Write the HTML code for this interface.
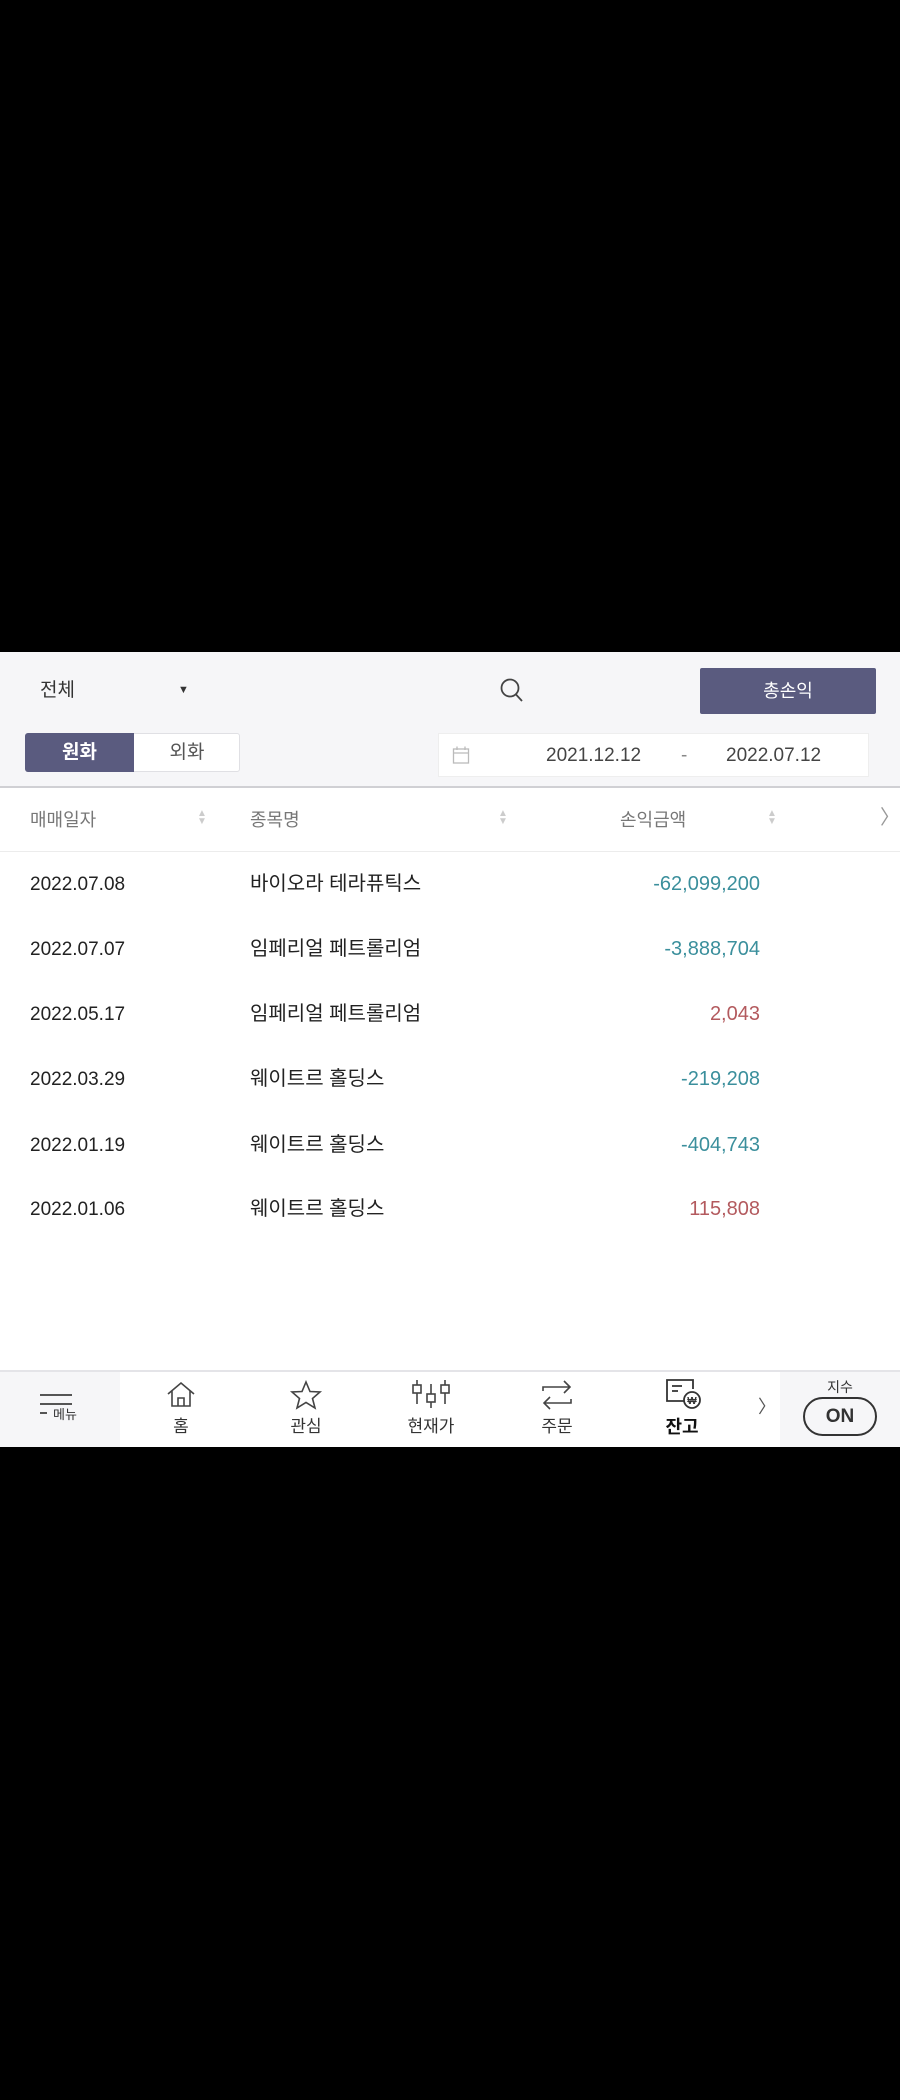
<!DOCTYPE html>
<html><head><meta charset="utf-8"><style>
*{margin:0;padding:0;box-sizing:border-box}
body{width:900px;height:2100px;background:#000;position:relative;font-family:"Liberation Sans","Noto Sans CJK KR",sans-serif;overflow:hidden}
.a{position:absolute}
.t{position:absolute;white-space:nowrap;line-height:1}
</style></head><body>
<div class="a" style="left:0;top:652px;width:900px;height:135px;background:#f6f6f8"></div>
<div class="a" style="left:0;top:786px;width:900px;height:2px;background:#d0d0d4"></div>
<div class="a" style="left:0;top:788px;width:900px;height:582px;background:#fff"></div>
<div class="t" style="left:40px;top:681px;font-size:19px;color:#333">전체</div>
<div class="t" style="left:178px;top:685px;font-size:11px;color:#333">▼</div>
<svg class="a" style="left:498px;top:677px" width="28" height="28" viewBox="0 0 28 28"><circle cx="12" cy="11" r="8.5" fill="none" stroke="#444" stroke-width="1.8"/><path d="M18 17.5L24 24" stroke="#444" stroke-width="1.8"/></svg>
<div class="a" style="left:700px;top:668px;width:176px;height:46px;background:#5a5b7f;border-radius:2px"></div>
<div class="t" style="left:700px;top:682px;width:176px;text-align:center;font-size:18px;color:#fff">총손익</div>
<div class="a" style="left:25px;top:733px;width:215px;height:39px;background:#fff;border:1px solid #e0e0e4;border-radius:3px"></div>
<div class="a" style="left:25px;top:733px;width:109px;height:39px;background:#5a5b7f;border-radius:3px 0 0 3px"></div>
<div class="t" style="left:25px;top:743px;width:109px;text-align:center;font-size:19px;font-weight:bold;color:#fff">원화</div>
<div class="t" style="left:134px;top:743px;width:106px;text-align:center;font-size:19px;color:#555">외화</div>
<div class="a" style="left:438px;top:733px;width:431px;height:44px;background:#fff;border:1px solid #eee"></div>
<svg class="a" style="left:452px;top:745px" width="18" height="20" viewBox="0 0 18 20"><rect x="1.5" y="4" width="15" height="14" fill="none" stroke="#bbb" stroke-width="1.3"/><path d="M1.5 8H16.5M5 1.5V5M13 1.5V5" stroke="#bbb" stroke-width="1.3"/></svg>
<div class="t" style="left:546px;top:746px;font-size:19px;color:#444">2021.12.12</div>
<div class="t" style="left:681px;top:746px;font-size:19px;color:#888">-</div>
<div class="t" style="left:726px;top:746px;font-size:19px;color:#444">2022.07.12</div>
<div class="t" style="left:30px;top:811px;font-size:18px;color:#777">매매일자</div>
<div class="t" style="left:197px;top:810px;font-size:10px;color:#ccc;line-height:8px">▲<br>▼</div>
<div class="t" style="left:250px;top:811px;font-size:18px;color:#777">종목명</div>
<div class="t" style="left:498px;top:810px;font-size:10px;color:#ccc;line-height:8px">▲<br>▼</div>
<div class="t" style="left:620px;top:811px;font-size:18px;color:#777">손익금액</div>
<div class="t" style="left:767px;top:810px;font-size:10px;color:#ccc;line-height:8px">▲<br>▼</div>
<div class="t" style="left:880px;top:808px;font-size:20px;color:#999">〉</div>
<div class="a" style="left:0;top:851px;width:900px;height:1px;background:#ececec"></div>

<div class="t" style="left:30px;top:875px;font-size:19px;color:#222">2022.07.08</div>
<div class="t" style="left:250px;top:874px;font-size:20px;color:#222">바이오라 테라퓨틱스</div>
<div class="t" style="left:500px;top:874px;width:260px;text-align:right;font-size:20px;color:#3b8f9c">-62,099,200</div>
<div class="t" style="left:30px;top:940px;font-size:19px;color:#222">2022.07.07</div>
<div class="t" style="left:250px;top:939px;font-size:20px;color:#222">임페리얼 페트롤리엄</div>
<div class="t" style="left:500px;top:939px;width:260px;text-align:right;font-size:20px;color:#3b8f9c">-3,888,704</div>
<div class="t" style="left:30px;top:1005px;font-size:19px;color:#222">2022.05.17</div>
<div class="t" style="left:250px;top:1004px;font-size:20px;color:#222">임페리얼 페트롤리엄</div>
<div class="t" style="left:500px;top:1004px;width:260px;text-align:right;font-size:20px;color:#b35a5e">2,043</div>
<div class="t" style="left:30px;top:1070px;font-size:19px;color:#222">2022.03.29</div>
<div class="t" style="left:250px;top:1069px;font-size:20px;color:#222">웨이트르 홀딩스</div>
<div class="t" style="left:500px;top:1069px;width:260px;text-align:right;font-size:20px;color:#3b8f9c">-219,208</div>
<div class="t" style="left:30px;top:1136px;font-size:19px;color:#222">2022.01.19</div>
<div class="t" style="left:250px;top:1135px;font-size:20px;color:#222">웨이트르 홀딩스</div>
<div class="t" style="left:500px;top:1135px;width:260px;text-align:right;font-size:20px;color:#3b8f9c">-404,743</div>
<div class="t" style="left:30px;top:1200px;font-size:19px;color:#222">2022.01.06</div>
<div class="t" style="left:250px;top:1199px;font-size:20px;color:#222">웨이트르 홀딩스</div>
<div class="t" style="left:500px;top:1199px;width:260px;text-align:right;font-size:20px;color:#b35a5e">115,808</div>

<div class="a" style="left:0;top:1370px;width:900px;height:2px;background:#e4e4e8"></div>
<div class="a" style="left:0;top:1372px;width:900px;height:75px;background:#fff"></div>
<div class="a" style="left:0;top:1372px;width:120px;height:75px;background:#f6f6f8"></div>
<div class="a" style="left:780px;top:1372px;width:120px;height:75px;background:#f6f6f8"></div>
<div class="a" style="left:40px;top:1394px;width:32px;height:2px;background:#555"></div>
<div class="a" style="left:40px;top:1403px;width:32px;height:2px;background:#555"></div>
<div class="a" style="left:40px;top:1412px;width:7px;height:2px;background:#555"></div>
<div class="t" style="left:53px;top:1408px;font-size:13px;color:#333">메뉴</div>
<svg class="a" style="left:165px;top:1380px" width="32" height="30" viewBox="0 0 32 30"><path d="M3 14L16 3L29 14M7 11V26H25V11M13 26V18H19V26" fill="none" stroke="#444" stroke-width="1.6"/></svg>
<div class="t" style="left:151px;top:1418px;width:60px;text-align:center;font-size:17px;color:#333">홈</div>
<svg class="a" style="left:289px;top:1380px" width="34" height="30" viewBox="0 0 34 30"><path d="M17 2L21 11.5L31 12L23.5 18.5L26 28L17 22.5L8 28L10.5 18.5L3 12L13 11.5Z" fill="none" stroke="#444" stroke-width="1.6"/></svg>
<div class="t" style="left:276px;top:1418px;width:60px;text-align:center;font-size:17px;color:#333">관심</div>
<svg class="a" style="left:410px;top:1378px" width="44" height="32" viewBox="0 0 44 32"><g fill="none" stroke="#444" stroke-width="1.6"><path d="M7 2V26M21 6V30M35 2V26"/><rect x="3" y="7" width="8" height="8" fill="#fff"/><rect x="17" y="16" width="8" height="8" fill="#fff"/><rect x="31" y="7" width="8" height="8" fill="#fff"/></g></svg>
<div class="t" style="left:396px;top:1418px;width:70px;text-align:center;font-size:17px;color:#333">현재가</div>
<svg class="a" style="left:540px;top:1379px" width="34" height="32" viewBox="0 0 34 32"><path d="M3 12V8H30M24 2L30 8L24 14M31 20V24H4M10 18L4 24L10 30" fill="none" stroke="#444" stroke-width="1.6"/></svg>
<div class="t" style="left:527px;top:1418px;width:60px;text-align:center;font-size:17px;color:#333">주문</div>
<svg class="a" style="left:664px;top:1377px" width="38" height="34" viewBox="0 0 38 34"><g fill="none" stroke="#333" stroke-width="1.8"><path d="M22 24H3V3H29V12"/><path d="M8 9H18M8 14H14"/><circle cx="28" cy="23" r="8" fill="#fff"/></g><text x="28" y="27" font-size="10" font-weight="bold" text-anchor="middle" fill="#333" font-family="Liberation Sans">₩</text></svg>
<div class="t" style="left:652px;top:1418px;width:60px;text-align:center;font-size:18px;font-weight:bold;color:#111">잔고</div>
<div class="t" style="left:758px;top:1398px;font-size:18px;color:#555">〉</div>
<div class="t" style="left:780px;top:1380px;width:120px;text-align:center;font-size:14px;color:#333">지수</div>
<div class="a" style="left:803px;top:1397px;width:74px;height:39px;border:2px solid #333;border-radius:20px;background:#f6f6f8"></div>
<div class="t" style="left:803px;top:1407px;width:74px;text-align:center;font-size:19px;font-weight:bold;color:#333">ON</div>
</body></html>
